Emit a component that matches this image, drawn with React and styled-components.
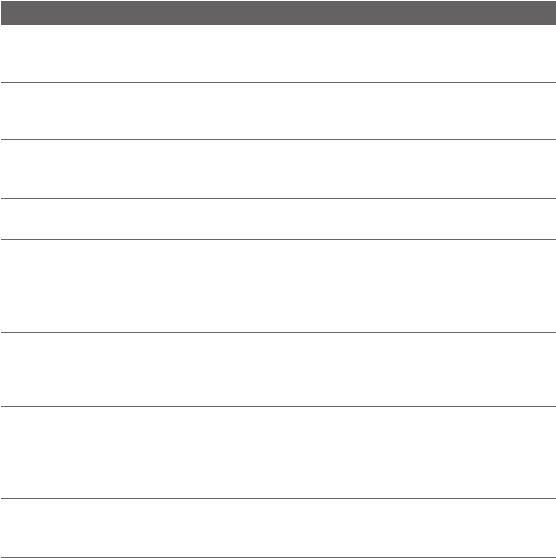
import React from 'react'
import styled, {createGlobalStyle} from 'styled-components'

const GlobalStyle = createGlobalStyle`
  html, body {
    margin: 0;
    padding: 0;
    background: #ffffff;
    font-family: "Liberation Sans", Arial, sans-serif;
  }
`

const Page = styled.div`
  padding: 1px 0 0 1px;
  width: 556px;
  box-sizing: border-box;
`

const Table = styled.div`
  display: flex;
  flex-direction: column;
`

const HeaderBar = styled.div`
  height: 24px;
  background: #646262;
  color: #ffffff;
  font-size: 13px;
`

const Row = styled.div`
  height: ${p => p.$h}px;
  border-bottom: 1px solid #666666;
`

// content heights of the body rows, top to bottom
const rows = [57, 56, 58, 40, 92, 73, 91, 58]

export default function App() {
  return (
    <>
      <GlobalStyle />
      <Page>
        <Table>
          <HeaderBar />
          {rows.map((h, i) => (
            <Row key={i} $h={h} />
          ))}
        </Table>
      </Page>
    </>
  )
}
